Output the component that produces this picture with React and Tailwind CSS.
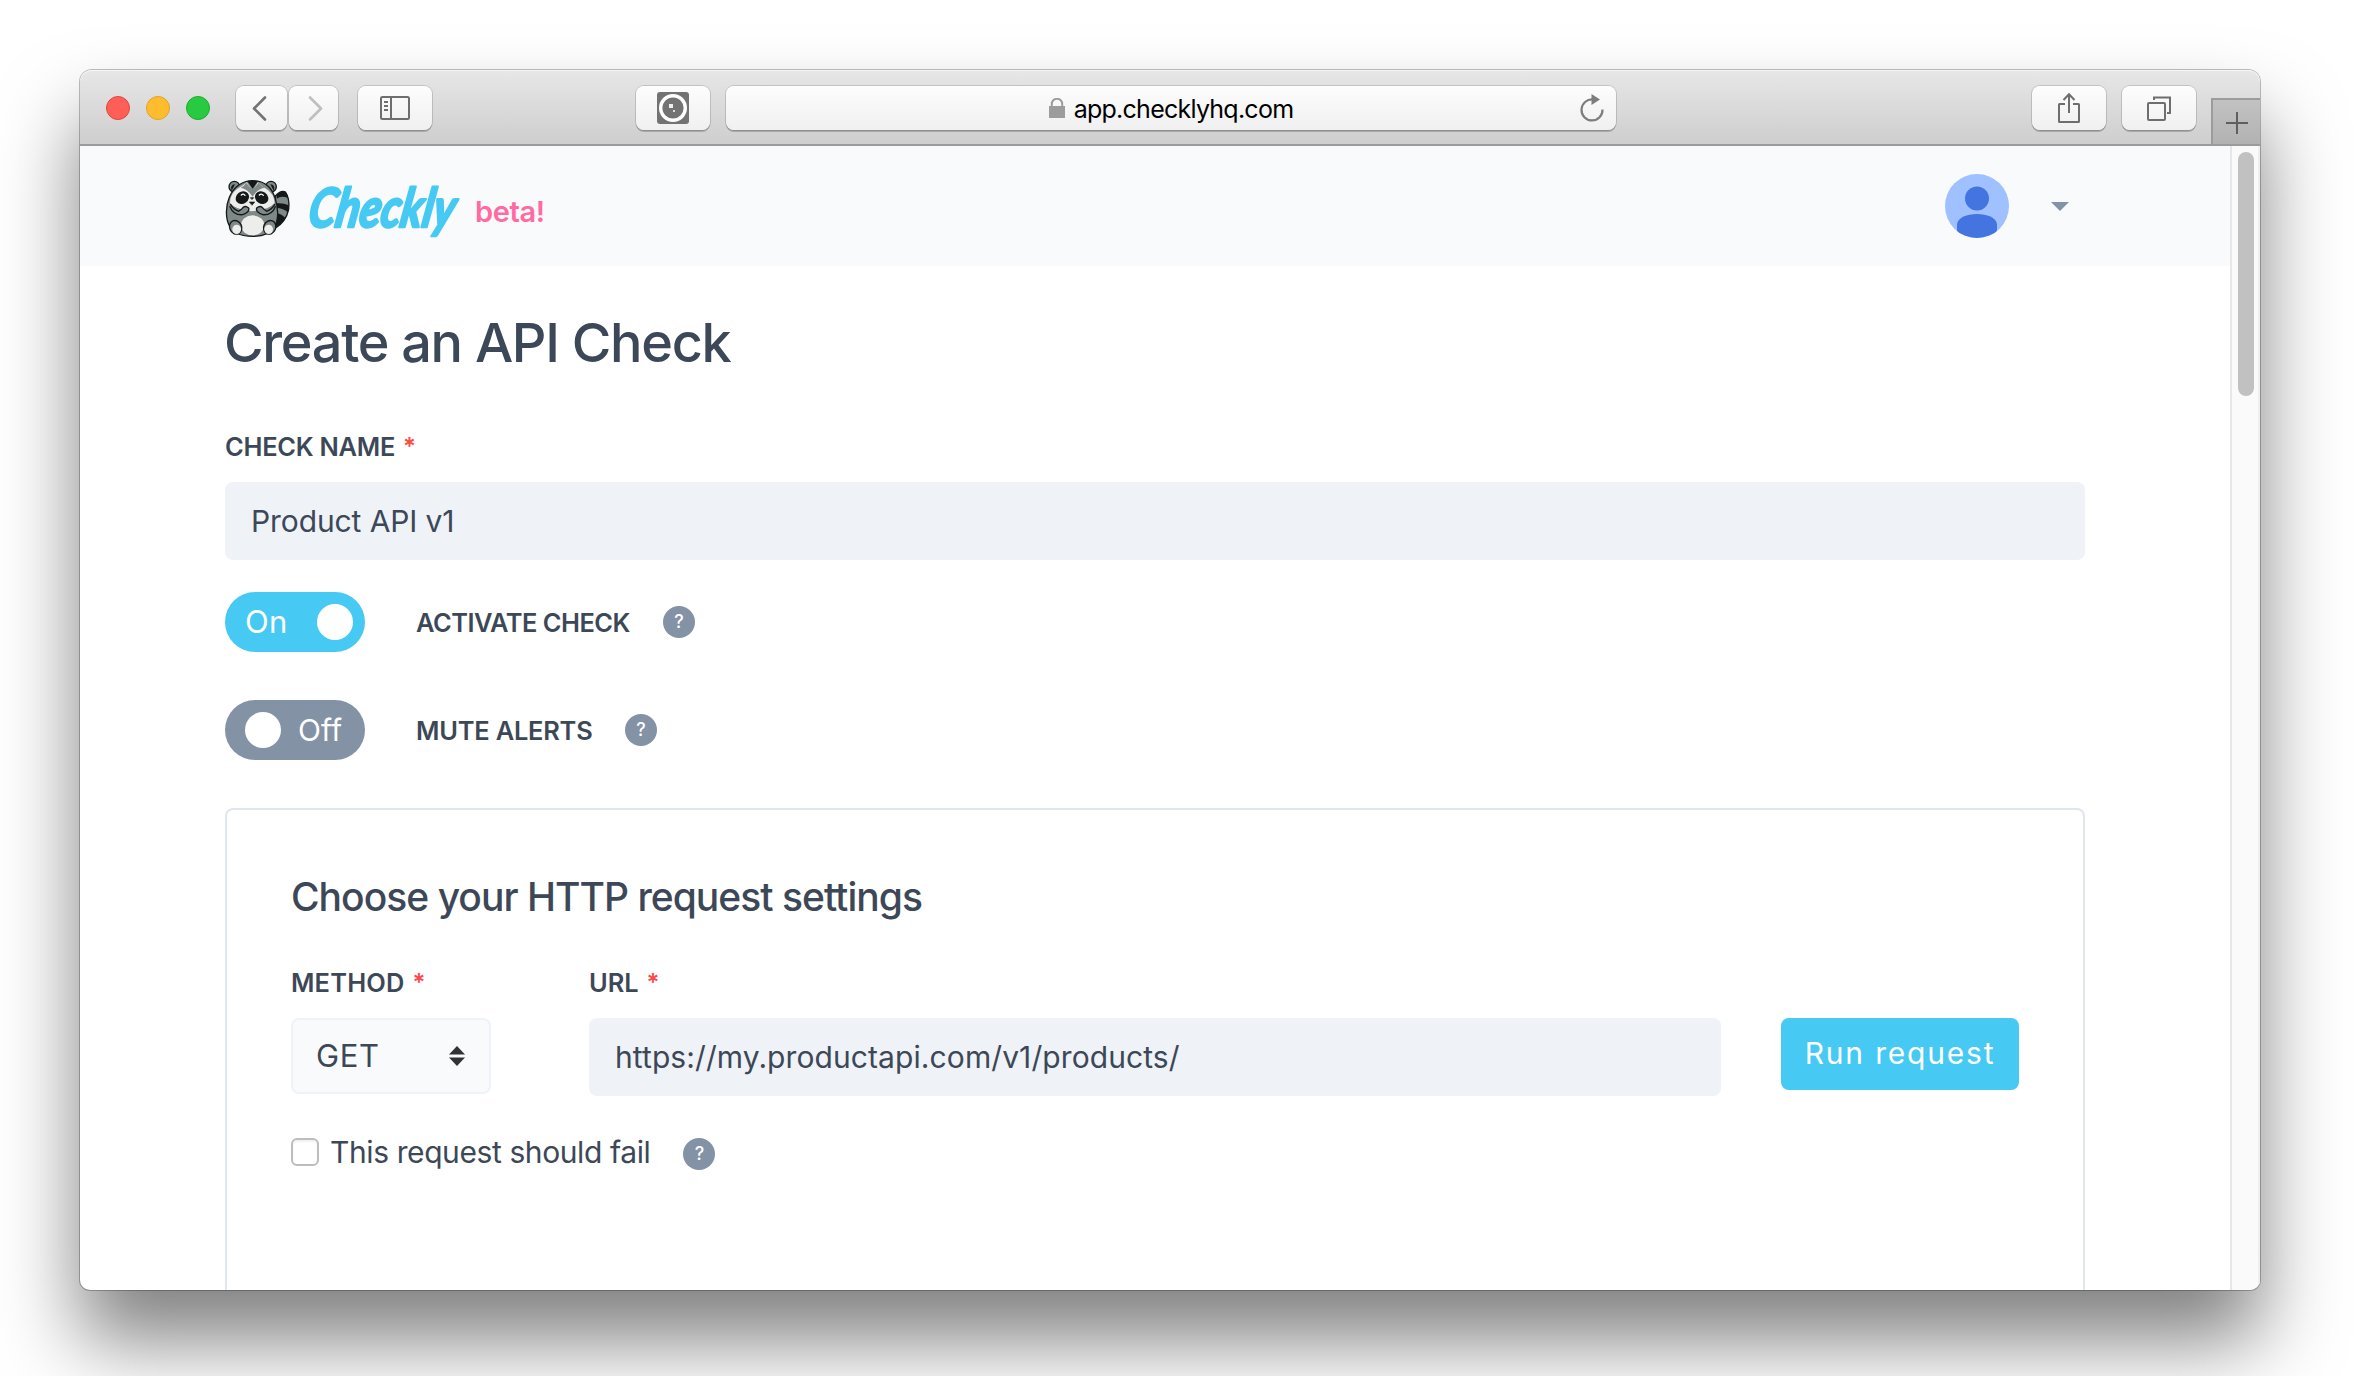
import React from "react";

function ToolButton({ className, children }) {
  return (
    <div
      className={`flex h-[44px] items-center justify-center rounded-[8px] bg-linear-to-b from-[#fdfdfd] to-[#f0f0f0] shadow-[0_0_0_1px_rgba(0,0,0,0.14),0_2px_0_0_rgba(0,0,0,0.2)] ${className}`}
    >
      {children}
    </div>
  );
}

function Toolbar() {
  return (
    <div className="flex h-[76px] shrink-0 items-start rounded-t-[12px] border-b-2 border-[#9b9b9b] bg-linear-to-b from-[#e7e7e7] to-[#cecece] pl-[26px] pt-4 shadow-[inset_0_1px_0_#f6f6f6]">
      <div className="flex h-[44px] items-center gap-4">
        <span className="size-6 rounded-full border border-[#e2463f] bg-[#ff5f57]" />
        <span className="size-6 rounded-full border border-[#e0a22a] bg-[#ffbd2e]" />
        <span className="size-6 rounded-full border border-[#1dad2b] bg-[#28ca41]" />
      </div>
      <ToolButton className="ml-[26px] w-[51px]">
        <svg width="16" height="32" viewBox="0 0 16 32" className="-ml-[6px]" fill="none" stroke="#737373" strokeWidth="2.6" strokeLinecap="round" strokeLinejoin="round">
          <path d="M14 5.500 3 16.500 14 27.500" />
        </svg>
      </ToolButton>
      <ToolButton className="ml-[2px] w-[49px]">
        <svg width="16" height="32" viewBox="0 0 16 32" className="ml-1" fill="none" stroke="#bfbfbf" strokeWidth="2.6" strokeLinecap="round" strokeLinejoin="round">
          <path d="M2 5.500 13 16.500 2 27.500" />
        </svg>
      </ToolButton>
      <ToolButton className="ml-5 w-[74px]">
        <svg width="30" height="24" viewBox="0 0 30 24" fill="none" stroke="#6e6e6e" strokeWidth="2">
          <rect x="1" y="1" width="28" height="22" rx="1.5" />
          <path d="M11 1v22M4 6h4M4 10h4M4 14h4" />
        </svg>
      </ToolButton>
      <ToolButton className="ml-[204px] w-[74px]">
        <svg width="32" height="32" viewBox="0 0 32 32">
          <rect width="32" height="32" rx="3" fill="#737373" />
          <circle cx="16" cy="16" r="12.3" fill="none" stroke="#fff" strokeWidth="3.4" />
          <rect x="12" y="12" width="4" height="4" fill="#eee" />
          <rect x="16" y="18" width="2" height="2" fill="#ddd" />
        </svg>
      </ToolButton>
      <ToolButton className="relative ml-4 w-[890px]">
        <svg width="16" height="20" viewBox="0 0 16 20" className="mr-[9px]">
          <rect y="8" width="16" height="12" fill="#9c9c9c" />
          <path d="M2.8 8.500V6a5.200 5.200 0 0 1 10.400 0v2.500" fill="none" stroke="#9c9c9c" strokeWidth="2" />
        </svg>
        <span className="mt-[2px] text-[25px] leading-[44px] tracking-[-0.75px] text-black">app.checklyhq.com</span>
        <svg width="26" height="28" viewBox="0 0 26 28" className="absolute right-[11px] top-[8px]">
          <path d="M14 5.500A10.500 10.500 0 1 0 23.500 15.500" fill="none" stroke="#7d7d7d" strokeWidth="2.200" />
          <path d="M12.500 0v11l8.500-5.500z" fill="#7d7d7d" />
        </svg>
      </ToolButton>
      <ToolButton className="ml-[416px] w-[74px]">
        <svg width="24" height="30" viewBox="0 0 24 30" className="-mt-[1px]" fill="none" stroke="#6e6e6e" strokeWidth="2">
          <path d="M8 11H2.500Q2 11 2 11.500V28.500Q2 29 2.500 29H21.500Q22 29 22 28.500V11.500Q22 11 21.500 11H16" />
          <path d="M12 20V1M6.500 7 12 1.200 17.500 7" />
        </svg>
      </ToolButton>
      <ToolButton className="ml-4 w-[74px]">
        <svg width="26" height="26" viewBox="0 0 26 26" fill="none" stroke="#6e6e6e" strokeWidth="2">
          <rect x="2" y="8" width="17" height="17" rx="1" />
          <path d="M8 5V2.500H24V18H21" />
        </svg>
      </ToolButton>
      <div className="ml-[15px] mt-[12px] flex h-[46px] w-[49px] items-center justify-center border-l-2 border-t-2 border-[#9c9c9c] bg-linear-to-b from-[#c2c2c2] to-[#b2b2b2]">
        <svg width="22" height="22" viewBox="0 0 22 22" stroke="#5f5f5f" strokeWidth="2" className="mt-[2px]">
          <path d="M11 0v22M0 11h22" />
        </svg>
      </div>
    </div>
  );
}

function Raccoon() {
  return (
    <svg width="72" height="70" viewBox="0 0 216 210" className="mt-[2px] shrink-0">
      <g strokeLinejoin="round" strokeLinecap="round">
        <path d="M160 72Q176 54 190 60Q204 80 200 112Q192 150 158 170Q150 120 160 72Z" fill="#7f8988" stroke="#151818" strokeWidth="4" />
        <path d="M164 70Q176 56 190 59Q196 66 198 78Q178 70 164 80ZM164 94Q184 92 200 100Q201 112 198 122Q184 108 163 108ZM163 124Q180 126 190 138Q180 156 162 166Z" fill="#151818" />
        <circle cx="37" cy="44" r="16" fill="#7f8988" stroke="#151818" strokeWidth="4" />
        <circle cx="147" cy="44" r="16" fill="#7f8988" stroke="#151818" strokeWidth="4" />
        <path d="M27 47Q30 37 39 37L29 56ZM157 47Q154 37 145 37L155 56Z" fill="#151818" />
        <path d="M92 26C128 26 150 48 160 80C168 108 170 142 158 165C146 187 120 193 92 193C64 193 38 187 24 165C10 142 10 104 22 76C34 46 60 26 92 26Z" fill="#7f8988" stroke="#151818" strokeWidth="4" />
        <path d="M74 31Q60 44 46 50Q24 66 24 92Q38 112 90 118Q144 112 158 92Q156 64 132 50Q118 44 108 31L92 56Z" fill="#ededeb" />
        <path d="M72 32Q66 44 56 47Q76 50 92 74Q106 50 128 47Q116 42 110 32L92 54Z" fill="#7f8988" />
        <path d="M76 28Q92 24 108 28L92 50Z" fill="#151818" />
        <ellipse cx="61" cy="77" rx="21" ry="18" transform="rotate(-36 61 77)" fill="#151818" />
        <ellipse cx="119" cy="77" rx="21" ry="18" transform="rotate(36 119 77)" fill="#151818" />
        <path d="M58 69Q64 63 69 70M112 69Q118 63 124 70" fill="none" stroke="#fff" strokeWidth="4" />
        <path d="M86 77h9l-4.500 5zM83 90h15l-7.500 9z" fill="#151818" stroke="#151818" strokeWidth="2" />
        <path d="M24 104Q34 130 62 128Q84 120 80 108Q68 98 60 110L50 118Q34 112 26 98M160 104Q150 130 122 128Q100 120 104 108Q116 98 124 110L134 118Q150 112 158 98" fill="#7f8988" stroke="#151818" strokeWidth="4" />
        <ellipse cx="92" cy="160" rx="35" ry="30" fill="#ededeb" />
        <ellipse cx="41" cy="166" rx="18" ry="21" transform="rotate(-24 41 166)" fill="#7f8988" stroke="#151818" strokeWidth="4" />
        <ellipse cx="143" cy="166" rx="18" ry="21" transform="rotate(24 143 166)" fill="#7f8988" stroke="#151818" strokeWidth="4" />
        <ellipse cx="44" cy="172" rx="13" ry="14" fill="#ededeb" />
        <ellipse cx="140" cy="172" rx="13" ry="14" fill="#ededeb" />
      </g>
    </svg>
  );
}

function Header() {
  return (
    <header className="flex h-[120px] shrink-0 items-center bg-[#f9fafc] pl-[142px] pr-[161px]">
      <Raccoon />
      <svg width="170" height="100" viewBox="0 0 170 100" className="ml-[9px] shrink-0 overflow-visible">
        <text
          x="0"
          y="71"
          transform="translate(16 0) skewX(-10)"
          fontFamily="Lato"
          fontSize="54"
          fontStyle="italic"
          fontWeight="700"
          textLength="146"
          lengthAdjust="spacingAndGlyphs"
          fill="#46c9f3"
          stroke="#46c9f3"
          strokeWidth="2.6"
          strokeLinejoin="round"
        >
          Checkly
        </text>
      </svg>
      <span className="ml-[2px] mt-[12px] text-[29px] font-semibold leading-8 tracking-[-0.4px] text-[#ff6ba1]">beta!</span>
      <div className="ml-auto flex items-center gap-[42px]">
        <svg width="64" height="64" viewBox="0 0 64 64">
          <clipPath id="avatar">
            <circle cx="32" cy="32" r="32" />
          </clipPath>
          <g clipPath="url(#avatar)">
            <rect width="64" height="64" fill="#a0c1ff" />
            <circle cx="32" cy="24.500" r="12" fill="#4474e0" />
            <path d="M12 64V50C13 43.500 22 40 32 40S51 43.500 52 50V64Z" fill="#4474e0" />
          </g>
        </svg>
        <svg width="18" height="9" viewBox="0 0 18 9">
          <path d="M0 0h18L9 9z" fill="#8492a6" />
        </svg>
      </div>
    </header>
  );
}

function Label({ children, className = "", star = true }) {
  return (
    <div className={`flex h-[30px] items-center text-[25.400px] font-semibold leading-[30px] text-[#3c4858] ${className}`}>
      {children}
      {star && <span className="ml-[8px] text-[24px] font-semibold tracking-normal text-[#ff4949]">*</span>}
    </div>
  );
}

function Help({ className = "" }) {
  return (
    <span className={`flex size-8 shrink-0 items-center justify-center rounded-full bg-[#8492a6] text-[18px] font-medium leading-8 text-white ${className}`}>
      ?
    </span>
  );
}

function CheckForm() {
  return (
    <div className="flex min-h-0 flex-1 flex-col pl-[145px] pr-[145px] pt-[45px] text-[30px] text-[#3c4858]">
      <h1 className="-ml-[1px] h-16 shrink-0 text-[54px] font-[450] leading-[64px] tracking-[-1.3px]">Create an API Check</h1>
      <Label className="mt-[57px] shrink-0 tracking-[-0.25px]">CHECK NAME</Label>
      <div className="mt-5 flex h-[78px] shrink-0 items-center rounded-[8px] bg-[#eff2f7] pl-[26px] tracking-[-0.1px]">Product API v1</div>

      <div className="mt-8 flex h-[60px] shrink-0 items-center">
        <div className="flex h-[60px] w-[140px] items-center justify-between rounded-full bg-[#46c9f3] pl-[20px] pr-3 text-white">
          <span className="text-[31px] leading-[60px] tracking-[0.3px]">On</span>
          <span className="size-9 rounded-full bg-white" />
        </div>
        <Label star={false} className="ml-[51px] mt-[2px] w-[214px] whitespace-nowrap tracking-[-0.5px]">ACTIVATE CHECK</Label>
        <Help className="ml-[33px]" />
      </div>

      <div className="mt-12 flex h-[60px] shrink-0 items-center">
        <div className="flex h-[60px] w-[140px] items-center justify-between rounded-full bg-[#8492a6] pl-5 pr-[23px] text-white">
          <span className="size-9 rounded-full bg-white" />
          <span className="leading-[60px]">Off</span>
        </div>
        <Label star={false} className="ml-[51px] mt-[2px] w-[177px] whitespace-nowrap tracking-[-0.2px]">MUTE ALERTS</Label>
        <Help className="ml-[32px]" />
      </div>

      <section className="mt-12 min-h-0 flex-1 rounded-t-[8px] border-2 border-b-0 border-[#e0e6ed] px-16 pt-[63px]">
        <h2 className="h-12 text-[39px] font-[450] leading-[48px] tracking-[-0.98px]">Choose your HTTP request settings</h2>
        <div className="mt-[47px] flex">
          <div className="w-[200px]">
            <Label className="tracking-[0.2px]">METHOD</Label>
            <div className="mt-5 flex h-[76px] items-center justify-between rounded-[8px] border-2 border-[#eff2f7] bg-[#f9fafc] pl-[23px] pr-[24px]">
              <span className="text-[31px] tracking-[0.6px]">GET</span>
              <svg width="16" height="20" viewBox="0 0 16 20">
                <path d="M8 0l8 8.500H0zM8 20l8-8.500H0z" fill="#333" />
              </svg>
            </div>
          </div>
          <div className="ml-[98px] w-[1132px]">
            <Label className="tracking-[0px]">URL</Label>
            <div className="mt-5 flex h-[78px] items-center rounded-[8px] bg-[#eff2f7] pl-[26px] tracking-[0.09px]">
              https://my.productapi.com/v1/products/
            </div>
          </div>
          <div className="ml-[60px] mt-[50px] flex h-[72px] w-[238px] items-center justify-center rounded-[8px] bg-[#46c9f3] pb-[2px] tracking-[1.8px] text-white">
            Run request
          </div>
        </div>
        <div className="mt-10 flex h-8 items-center">
          <span className="size-7 rounded-[6px] border-2 border-[#bdbdbd] bg-white shadow-[inset_0_2px_2px_rgba(0,0,0,0.06)]" />
          <span className="ml-[11px] leading-8 tracking-[-0.4px]">This request should fail</span>
          <Help className="ml-[33px] mt-1" />
        </div>
      </section>
    </div>
  );
}

export default function App() {
  return (
    <div className="h-[1376px] w-[2354px] overflow-hidden bg-white pl-20 pt-[70px] font-['Inter',sans-serif]">
      <div className="flex h-[1220px] w-[2180px] flex-col rounded-b-[10px] rounded-t-[12px] bg-white shadow-[0_0_0_1px_rgba(0,0,0,0.25),0_50px_80px_rgba(0,0,0,0.5)]">
        <Toolbar />
        <div className="flex min-h-0 flex-1 overflow-hidden rounded-b-[10px]">
          <main className="flex w-[2150px] flex-col">
            <Header />
            <CheckForm />
          </main>
          <div className="w-[30px] border-l-2 border-r-2 border-l-[#e7e7e7] border-r-[#efefef] bg-[#fafafa] pl-[6px] pt-[6px]">
            <div className="h-[244px] w-4 rounded-full bg-[#c1c1c1]" />
          </div>
        </div>
      </div>
    </div>
  );
}
